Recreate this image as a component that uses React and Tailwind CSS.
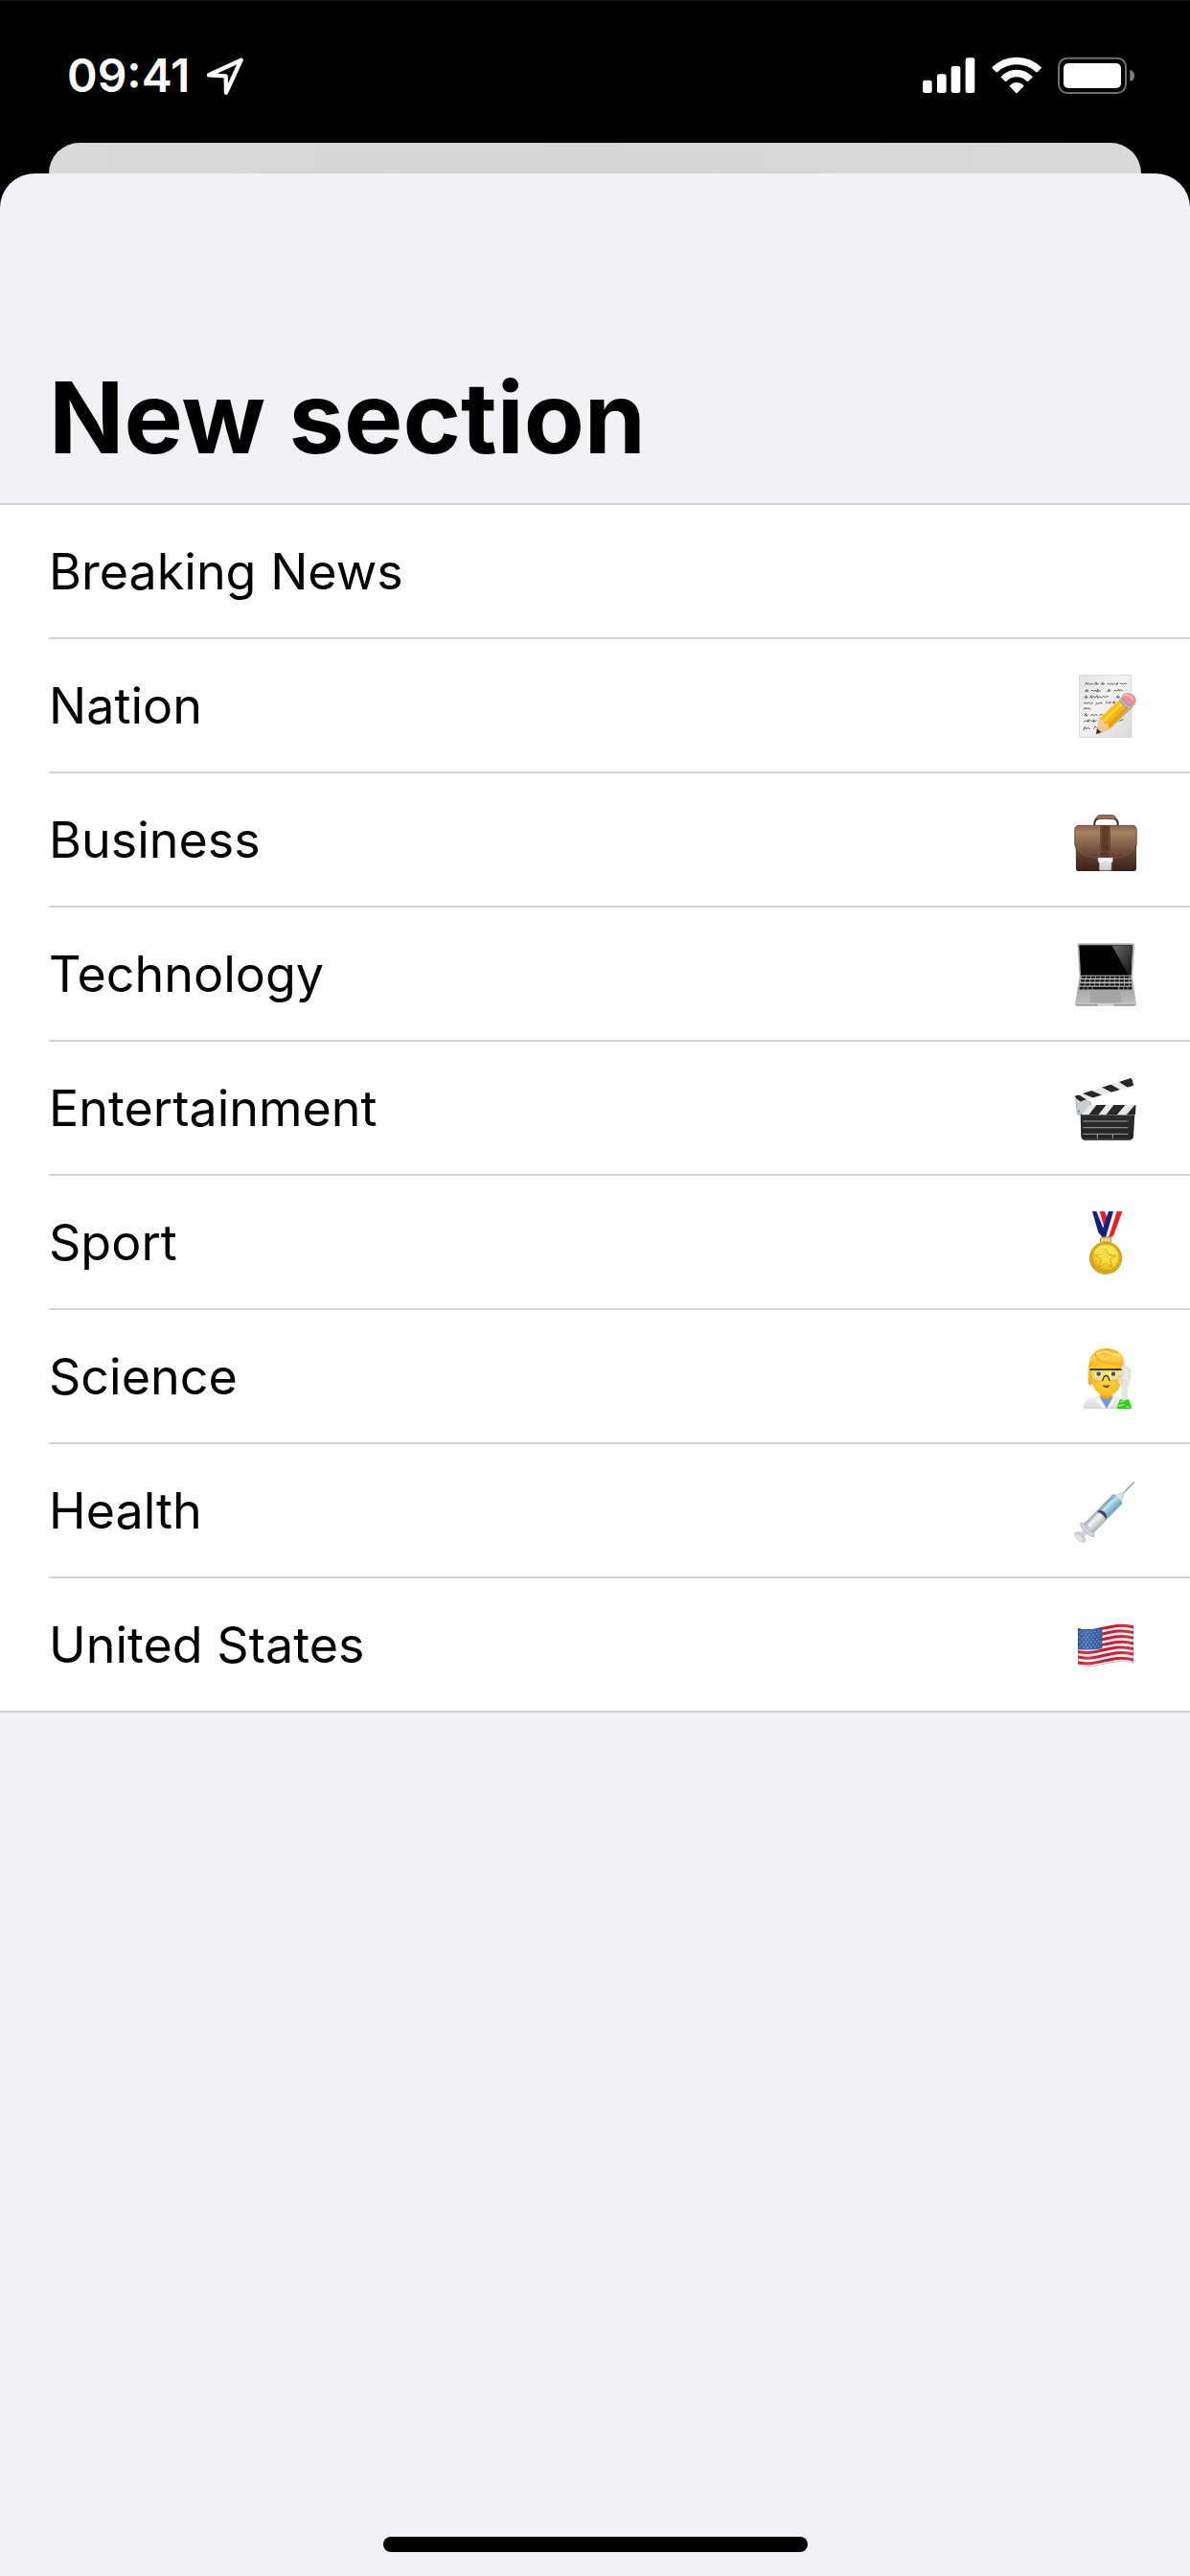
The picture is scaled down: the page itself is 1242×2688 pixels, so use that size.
import React from "react";

const emojiBox = {
  viewBox: "63 72 198 198",
  className: "size-[66px] shrink-0",
  "aria-hidden": true,
};

function MemoIcon() {
  const lines = [
    "M97 104l5-7 3 6 5-4 4 4 6-3 4 2M128 104l4-8 2 7 6-3M147 103l6-7-1 7 7-3M167 103l5-4 4 4 6-4 3 5 5-5 4 3 6-5-3 9M206 101l6-2 5 3 5-3 6 1",
    "M96 125l8-7-2 8 7-4M116 124l4-4 4 4 6-4 3 6 5-9-1 8 9-3M165 125l8-8-2 8 7-4M187 124l5-4 5 4 6-6 1 6 5-4 6 2",
    "M94 145l8-8-2 9 7-4M113 145l4-8 1 8 6-5 5 4 6-7 2 8 6-5 5 4 7-5 5 4 6-4 5 3M194 145l7-8-1 8 8-4",
    "M93 163l6-4 4 4 6-4 6 4 8-4M131 166l4-6 5 3 7-4 6 4M161 163l5-5 4 4 7-6-1 7M182 162l7-7-1 7 5-3",
    "M93 181l5-7 3 6 7-3 8 3",
    "M93 201l8-8-1 9 7-4M115 200l5-4 5 4 6-4 6 4M142 200l6-4 7 3",
    "M93 221l6-6 4 4 5-7-2 8 8-6 5 5 7-7-2 8 10-4",
    "M92 247l5-12 3 7 7-3 7 3M124 242l5-7 5 4",
    "M205 218l8-4 5-3M190 219l7-4",
  ];
  return (
    <svg {...emojiBox}>
      <defs>
        <linearGradient id="memo-paper" x1="0" y1="0" x2="1" y2="1">
          <stop offset="0" stopColor="#e3e3e3" />
          <stop offset=".45" stopColor="#f3f3f3" />
          <stop offset="1" stopColor="#d9d9d9" />
        </linearGradient>
        <linearGradient id="memo-wood" x1="0" y1="0" x2="1" y2="1">
          <stop offset="0" stopColor="#ffd23c" />
          <stop offset=".45" stopColor="#f9bd14" />
          <stop offset="1" stopColor="#c78200" />
        </linearGradient>
      </defs>
      <rect x="80" y="73" width="163" height="195" fill="url(#memo-paper)" stroke="#d2d2d2" strokeWidth="2" />
      <g fill="none" stroke="#4a4a4a" strokeWidth="2.5" strokeLinejoin="round">
        {lines.map((d) => (
          <path key={d} d={d} />
        ))}
      </g>
      <path d="M136 262L180 238L250 172L258 156L240 150L160 226Z" fill="#000" opacity=".22" />
      <path d="M132 258l10-49 63-58 30 26-62 66z" fill="url(#memo-wood)" />
      <path d="M152 219l64-59" stroke="#ffe067" strokeWidth="6" opacity=".7" />
      <path d="M166 237l64-62" stroke="#de9a06" strokeWidth="6" opacity=".7" />
      <path d="M132 258l9-49 11 3 4 12 13 4 4 15z" fill="#ecc995" />
      <path d="M132 258l3-17 13 11z" fill="#2c2a2a" />
      <path d="M205 151l9-9 29 26-8 9q-20-4-30-26z" fill="#8f9db3" />
      <path d="M209 148q10 20 30 26" fill="none" stroke="#dde4ec" strokeWidth="3" />
      <path d="M213 142q3-14 19-13 24 4 25 25 0 12-14 14-22-4-30-26z" fill="#ee8c98" />
      <path d="M222 136q14-2 24 12" fill="none" stroke="#ffbec5" strokeWidth="6" strokeLinecap="round" />
    </svg>
  );
}

function BriefcaseIcon() {
  return (
    <svg {...emojiBox}>
      <defs>
        <linearGradient id="case-flap" x1="0" y1="0" x2="0" y2="1">
          <stop offset="0" stopColor="#87644b" />
          <stop offset=".22" stopColor="#a5825f" />
          <stop offset="1" stopColor="#5b3b2c" />
        </linearGradient>
        <linearGradient id="case-body" x1="0" y1="0" x2="0" y2="1">
          <stop offset="0" stopColor="#7a5846" />
          <stop offset="1" stopColor="#3b211a" />
        </linearGradient>
        <linearGradient id="case-lock" x1="0" y1="0" x2="0" y2="1">
          <stop offset="0" stopColor="#ffffff" />
          <stop offset="1" stopColor="#c6c6c8" />
        </linearGradient>
      </defs>
      <path d="M127 124v-9q2-10 12-12M200 124v-9q-2-10-12-12" fill="none" stroke="#3e2b21" strokeWidth="6" />
      <path d="M131 105q3-13 14-13h36q12 0 14 13-32-5-64 0z" fill="#a17451" stroke="#694833" strokeWidth="3" />
      <path d="M68 170h190v90q0 7-7 7H76q-7 0-7-7z" fill="url(#case-body)" />
      <path d="M65 136q1-12 13-12h168q12 0 13 12v47q-6 40-72 46h-52q-64-6-70-46z" fill="url(#case-flap)" stroke="#54382a" strokeWidth="2" />
      <path d="M72 190q12 34 66 36h50q54-2 66-36" fill="none" stroke="#8a6b57" strokeWidth="2" opacity=".7" />
      <path d="M145 124h31v81h-31z" fill="#50301f" opacity=".8" />
      <path d="M149 125v78M172 125v78" stroke="#7d5a41" strokeWidth="2" />
      <path d="M140 226q2-23 20-23t22 23z" fill="#5b3b2b" stroke="#87634c" strokeWidth="1.5" />
      <path d="M138 225h46v12l-4 4v20q0 4-4 4h-30q-4 0-4-4v-20l-4-4z" fill="url(#case-lock)" stroke="#96908d" strokeWidth="1.5" />
      <path d="M147 247h28v9h-28z" fill="#d2d2d5" />
      <path d="M153 243q8-10 16 0" stroke="#b0b0b2" strokeWidth="2" fill="none" />
    </svg>
  );
}

function LaptopIcon() {
  return (
    <svg {...emojiBox}>
      <defs>
        <linearGradient id="laptop-base" x1="0" y1="0" x2="0" y2="1">
          <stop offset="0" stopColor="#979797" />
          <stop offset="1" stopColor="#bdbdbd" />
        </linearGradient>
        <linearGradient id="laptop-glare" x1="0" y1="0" x2="1" y2="1">
          <stop offset="0" stopColor="#6b6b6b" />
          <stop offset="1" stopColor="#111" />
        </linearGradient>
      </defs>
      <path d="M75 78q0-4 4-4h168q4 0 4 4l-6 98H81z" fill="#b5b5b5" stroke="#8c8c8c" strokeWidth="1.5" />
      <path d="M79 79h167l-5 94H84z" fill="#030303" />
      <path d="M182 80h63l-4 92h-8z" fill="url(#laptop-glare)" />
      <path d="M81 173h163l14 90H66z" fill="url(#laptop-base)" />
      <path d="M84 176h157l3 42H79z" fill="#bdbdbd" />
      <g stroke="#101010" fill="none">
        <path d="M86 179.500h154" strokeWidth="6" strokeDasharray="13 2" />
        <path d="M84 190h158" strokeWidth="7" strokeDasharray="13 2.200" />
        <path d="M82 202h161" strokeWidth="7" strokeDasharray="13.500 2" />
        <path d="M80 213.500h39M121 213.500h81M205 213.500h39" strokeWidth="8" />
      </g>
      <path d="M93 210v8M106 210v8M218 210v8M231 210v8" stroke="#bdbdbd" strokeWidth="2" />
      <path d="M116 222h91l3 36h-97z" fill="#a6a6a6" stroke="#999" strokeWidth="1" />
      <path d="M66 262h69l3 3h49l3-3h68q0 7-7 7H73q-7 0-7-7z" fill="#9b9b9b" />
      <path d="M67 262h68M190 262h67" stroke="#dedede" strokeWidth="2" />
      <path d="M137 267h50" stroke="#eee" strokeWidth="4" />
    </svg>
  );
}

function ClapperIcon() {
  return (
    <svg {...emojiBox}>
      <defs>
        <linearGradient id="clap-body" x1="0" y1="0" x2="0" y2="1">
          <stop offset="0" stopColor="#2e2e2e" />
          <stop offset=".9" stopColor="#222" />
          <stop offset="1" stopColor="#555" />
        </linearGradient>
        <clipPath id="clap-top">
          <path d="M65 131L240 75q4-1 5 2l4 21-173 52z" />
        </clipPath>
        <clipPath id="clap-bar">
          <path d="M86 190l26-31h141q4 0 4 4l-2 25-6 3z" />
        </clipPath>
      </defs>
      <path d="M68 137l8-5 38 18 6 22-15 17H73z" fill="#c9ccd0" stroke="#989ca1" strokeWidth="2" />
      <circle cx="84" cy="147" r="2.500" fill="#555" />
      <circle cx="78" cy="179" r="2.500" fill="#555" />
      <circle cx="102" cy="178" r="2.500" fill="#555" />
      <g clipPath="url(#clap-top)">
        <path d="M60 60h200v100H60z" fill="#e8e8e8" />
        <path d="M58 130l16-5 28 17-18 8zM88 122l28-9 43 19-26 9zM148 103l28-9 36 20-25 9zM203 86l38-12 18 30-23 4z" fill="#282828" />
      </g>
      <path d="M83 188h170l-4 68q-1 13-13 14H98q-12-1-13-13z" fill="url(#clap-body)" />
      <g clipPath="url(#clap-bar)">
        <path d="M80 155h180v40H80z" fill="#e8e8e8" />
        <path d="M104 191l27-34h30l-27 34zM158 191l27-34h36l-29 34zM222 191l29-34h8v34z" fill="#282828" transform="translate(4 0)" />
      </g>
      <path d="M91 210h141M91 230h141M91 250h141M136 250v14M184 250v14" stroke="#b8b8b8" strokeWidth="2.500" />
    </svg>
  );
}

function MedalIcon() {
  return (
    <svg {...emojiBox}>
      <defs>
        <radialGradient id="medal-face" cx=".6" cy=".3" r=".75">
          <stop offset="0" stopColor="#fff05a" />
          <stop offset=".6" stopColor="#f7d52c" />
          <stop offset="1" stopColor="#d9a416" />
        </radialGradient>
      </defs>
      <path d="M120 72h40l25 76-24 5q-16-3-22-15z" fill="#f4f4f6" />
      <path d="M143 72h16l15 42-13 20z" fill="#ee2024" />
      <path d="M120 72h13l27 68-7 14-14-16z" fill="#15207e" />
      <path d="M172 72h41l-26 76-13 8-20-9z" fill="#f7f7f9" />
      <path d="M197 72h17l-26 72q-6 10-17 10z" fill="#ed2025" />
      <path d="M171 72h15l-24 82h-11l-4-10z" fill="#17227f" />
      <path d="M146 168v-9q1-6 7-6h19q7 0 7 6v9" fill="#ecd47e" stroke="#a78028" strokeWidth="3" />
      <circle cx="162" cy="218" r="50" fill="#dfa71f" stroke="#b37f12" strokeWidth="2" />
      <circle cx="162" cy="217" r="43" fill="url(#medal-face)" stroke="#c4941a" strokeWidth="2" />
      <path d="M162 189l9 19 22 2-17 14 5 22-19-12-20 12 6-22-17-14 22-2z" fill="#fade45" stroke="#b5841a" strokeWidth="2" strokeLinejoin="round" />
      <path d="M128 205q9-21 29-23" fill="none" stroke="#fff7a0" strokeWidth="4" opacity=".7" />
      <path d="M162 190l-8 19-20 2" fill="none" stroke="#fff4a0" strokeWidth="2" />
    </svg>
  );
}

function ScientistIcon() {
  return (
    <svg {...emojiBox}>
      <defs>
        <linearGradient id="sci-hair" x1="0" y1="0" x2="0" y2="1">
          <stop offset="0" stopColor="#f6b02a" />
          <stop offset=".45" stopColor="#ffd251" />
          <stop offset="1" stopColor="#f0a51d" />
        </linearGradient>
        <radialGradient id="sci-skin" cx=".5" cy=".5" r=".6">
          <stop offset="0" stopColor="#ffdf45" />
          <stop offset="1" stopColor="#f5b51f" />
        </radialGradient>
        <linearGradient id="sci-coat" x1="0" y1="0" x2="0" y2="1">
          <stop offset="0" stopColor="#f4f5f6" />
          <stop offset="1" stopColor="#d6d8db" />
        </linearGradient>
      </defs>
      <path d="M92 270q0-28 27-35l24-7h40l26 8q25 9 25 34z" fill="url(#sci-coat)" />
      <path d="M143 232l22 38 20-38z" fill="#6a9bdb" />
      <path d="M145 212h37v20q-18 16-37 0z" fill="#eda61a" />
      <path d="M139 230l25 40-11-3-24-20zM188 230l-22 40 15-7 15-21z" fill="#fcfcfc" stroke="#c7c9cc" strokeWidth="1.500" />
      <path d="M108 192q-4-26 1-60 4-38 34-48 22-6 41 0 33 7 37 45 2 34-3 61-6 8-12 0h-84q-8 12-14 2z" fill="url(#sci-hair)" />
      <path d="M119 140q14-8 15-30 34 18 78 20v46q-2 27-18 42-14 11-29 11-16 0-29-11-17-17-17-42z" fill="url(#sci-skin)" />
      <path d="M110 142q-4-30 24-52 24-12 54-2 28 14 29 50-8-6-12-10-42-2-68-20-4 24-27 34z" fill="url(#sci-hair)" />
      <path d="M134 99q16-12 34-7 22 12 43 10" fill="none" stroke="#ffe68c" strokeWidth="5" opacity=".8" />
      <path d="M131 97q-3 20 21 27 26 8 55 5" fill="none" stroke="#d98f12" strokeWidth="3" opacity=".6" />
      <path d="M117 149h92v17q-3 18-23 17-14 0-18-14h-9q-4 15-20 15-18-2-22-18z" fill="#eef0d0" fillOpacity=".4" stroke="#b89c5c" strokeWidth="2" />
      <ellipse cx="140" cy="162" rx="11" ry="9" fill="#faf8ec" />
      <ellipse cx="186" cy="162" rx="11" ry="9" fill="#faf8ec" />
      <circle cx="140" cy="161" r="7" fill="#5a5148" />
      <circle cx="186" cy="161" r="7" fill="#5a5148" />
      <path d="M114 147h97" stroke="#161616" strokeWidth="5" strokeLinecap="round" />
      <path d="M152 182q4-16 11-16t11 16" fill="none" stroke="#3a3320" strokeWidth="4" strokeLinecap="round" />
      <path d="M154 197q9 3 19 0-1 6-9 6t-10-6z" fill="#7a2d10" stroke="#6b2c0c" strokeWidth="2" />
      <path d="M211 190h19l1 45 12 29q2 6-4 6h-37q-6 0-4-6l13-29z" fill="#dce8dc" opacity=".9" />
      <path d="M207 240q13 6 27 0l9 24q1 6-5 6h-37q-5 0-3-6z" fill="#2fd01c" />
      <path d="M210 248l10-3M205 261l13-4M227 263l8 3" stroke="#a3f28d" strokeWidth="4" strokeLinecap="round" />
      <g fill="#e2e2e2" opacity=".88">
        <circle cx="221" cy="143" r="10" />
        <circle cx="232" cy="152" r="11" />
        <circle cx="213" cy="159" r="10" />
        <circle cx="230" cy="170" r="12" />
        <circle cx="214" cy="182" r="13" />
        <circle cx="225" cy="190" r="12" />
      </g>
      <path d="M217 150q10-5 14 3M212 174q8-6 17 1M220 164q11-3 12 5" fill="none" stroke="#f8f8f8" strokeWidth="3" />
    </svg>
  );
}

function SyringeIcon() {
  return (
    <svg {...emojiBox}>
      <defs>
        <linearGradient id="syr-glass" x1="0" y1="0" x2="0" y2="1">
          <stop offset="0" stopColor="#a8afb7" />
          <stop offset=".4" stopColor="#f0f1f3" />
          <stop offset="1" stopColor="#acb3ba" />
        </linearGradient>
        <linearGradient id="syr-fluid" x1="0" y1="0" x2="0" y2="1">
          <stop offset="0" stopColor="#7fa5b8" />
          <stop offset=".35" stopColor="#b4dcee" />
          <stop offset="1" stopColor="#6f9fbb" />
        </linearGradient>
      </defs>
      <g transform="translate(82 252) rotate(-45.500)">
        <path d="M178 0h62" stroke="#a6adb5" strokeWidth="4" />
        <path d="M205-1h38" stroke="#747d87" strokeWidth="2" />
        <path d="M168-12l22 7v10l-22 8z" fill="#d3eae9" stroke="#9db6bd" strokeWidth="2" />
        <rect x="-3" y="-7" width="40" height="14" fill="#d4d7da" stroke="#b6babf" strokeWidth="1.500" />
        <rect x="32" y="-20" width="138" height="40" rx="6" fill="url(#syr-glass)" stroke="#8e979f" strokeWidth="2" />
        <path d="M103-18h61q6 0 6 6v24q0 6-6 6h-61z" fill="url(#syr-fluid)" />
        <path d="M111-18v36" stroke="#85b2ca" strokeWidth="2" />
        <path d="M40-8h118" stroke="#fff" strokeWidth="3" opacity=".6" />
        <path d="M94-18q10 18 2 36 13-2 13-18t-15-18z" fill="#3d444d" />
        <ellipse cx="32" cy="0" rx="8" ry="29" fill="#dcdfe2" stroke="#9ba1a7" strokeWidth="2.500" />
        <ellipse cx="35" cy="0" rx="5" ry="20" fill="#c9ced2" />
        <ellipse cx="0" cy="0" rx="11" ry="20" fill="#cacdd0" stroke="#b2b6bb" strokeWidth="2" />
        <ellipse cx="-4" cy="0" rx="7" ry="15" fill="#dfe1e3" />
      </g>
    </svg>
  );
}

function FlagIcon() {
  const stripes = [122, 139, 156, 173, 190, 207, 224];
  const starRows = [128, 136, 144, 152, 160, 168, 176];
  return (
    <svg {...emojiBox}>
      <defs>
        <clipPath id="flag-shape">
          <path d="M75 117c55 16 110-28 174-8v118c-64-20-119 24-174 4z" />
        </clipPath>
        <linearGradient id="flag-shade">
          <stop offset="0" stopColor="#000" stopOpacity=".12" />
          <stop offset=".2" stopColor="#fff" stopOpacity=".1" />
          <stop offset=".55" stopColor="#000" stopOpacity=".05" />
          <stop offset=".85" stopColor="#fff" stopOpacity=".08" />
          <stop offset="1" stopColor="#000" stopOpacity=".2" />
        </linearGradient>
      </defs>
      <g clipPath="url(#flag-shape)">
        <path d="M63 72h198v198H63z" fill="#fafafa" />
        {stripes.map((y) => (
          <path key={y} d={`M75 ${y}c55 16 110-28 174-8`} fill="none" stroke="#d61a30" strokeWidth="9" />
        ))}
        <path d="M75 114q38 14 76-1v68q-38 6-76 2z" fill="#2d5ba5" />
        {starRows.map((y, i) => (
          <path
            key={y}
            d={`M${i % 2 ? 85 : 79} ${y}q34 4 ${i % 2 ? 62 : 70}-4`}
            fill="none"
            stroke="#c3d5ec"
            strokeWidth="3"
            strokeDasharray="3.500 8.500"
          />
        ))}
        <path d="M63 72h198v198H63z" fill="url(#flag-shade)" />
        <path d="M75 117c55 16 110-28 174-8v118c-64-20-119 24-174 4z" fill="none" stroke="#5a2029" strokeWidth="3" opacity=".35" />
      </g>
    </svg>
  );
}

function LocationArrow() {
  return (
    <svg viewBox="648 177 120 120" className="size-10" aria-label="Location in use">
      <path d="M657 235L758 188L711 290L710 238Z" fill="none" stroke="#fff" strokeWidth="13" strokeLinejoin="round" />
    </svg>
  );
}

function SignalIcon() {
  return (
    <svg viewBox="188 177 165 120" className="h-10 w-[55px]" aria-label="Cellular signal" fill="#fff">
      <rect x="188" y="251" width="29" height="40" rx="7" />
      <rect x="233" y="232" width="29" height="59" rx="7" />
      <rect x="277" y="207" width="29" height="84" rx="7" />
      <rect x="322" y="181" width="29" height="110" rx="7" />
    </svg>
  );
}

function WifiIcon() {
  return (
    <svg viewBox="403 175 156 120" className="h-10 w-[52px]" aria-label="Wi-Fi" fill="#fff">
      <path d="M405 208q32-31 76-31t77 31q2 2 0 4l-11 11q-3 2-6 0-26-23-60-23t-59 23q-3 2-6 0l-11-11q-2-2 0-4z" />
      <path d="M433 237q20-21 48-21t49 21q2 2 0 4l-12 11q-3 2-5 0-14-13-32-13t-31 13q-3 2-5 0l-12-11q-2-2 0-4z" />
      <path d="M460 265q9-9 21-9t22 9q2 2 0 4l-20 20q-2 2-4 0l-19-20q-2-2 0-4z" />
    </svg>
  );
}

function BatteryIcon() {
  return (
    <svg viewBox="612 176 240 120" className="h-10 w-20" aria-label="Battery full">
      <rect x="615" y="181" width="210" height="109" rx="27" fill="none" stroke="#6f6f6f" strokeWidth="6" />
      <rect x="630" y="197" width="180" height="78" rx="15" fill="#fff" />
      <path d="M838 218q14 4 14 18t-14 17z" fill="#808080" />
    </svg>
  );
}

const sections = [
  { name: "Breaking News" },
  { name: "Nation", Icon: MemoIcon },
  { name: "Business", Icon: BriefcaseIcon },
  { name: "Technology", Icon: LaptopIcon },
  { name: "Entertainment", Icon: ClapperIcon },
  { name: "Sport", Icon: MedalIcon },
  { name: "Science", Icon: ScientistIcon },
  { name: "Health", Icon: SyringeIcon },
  { name: "United States", Icon: FlagIcon },
];

function StatusBar() {
  return (
    <header className="flex items-center justify-between border-t border-[#161616] pt-[58px] pr-[58px] pb-[50px] pl-[70px] text-white">
      <div className="flex items-center gap-[17px]">
        <time className="text-[48px] leading-10 font-semibold">09:41</time>
        <LocationArrow />
      </div>
      <div className="flex items-center gap-[17px]">
        <SignalIcon />
        <WifiIcon />
        <BatteryIcon />
      </div>
    </header>
  );
}

function SectionRow({ name, Icon }) {
  return (
    <li className="group pl-[51px]">
      <button
        type="button"
        className="flex h-[140px] w-full items-center justify-between border-b-2 border-[#d6d6d8] pt-[2px] pr-[55px] text-left group-last:h-[138px] group-last:border-b-0"
      >
        <span>{name}</span>
        {Icon && <Icon />}
      </button>
    </li>
  );
}

export default function App() {
  return (
    <div className="flex min-h-screen flex-col bg-black font-['Inter','Liberation_Sans',sans-serif] text-black">
      <StatusBar />
      <div className="mx-[51px] h-8 rounded-t-[32px] bg-linear-to-r from-[#dad8d8] via-[#d5d5d5] to-[#dadada]" />
      <main className="flex grow flex-col rounded-t-[36px] bg-[#f2f1f6]">
        <h1 className="px-[51px] pt-[195px] pb-[29px] text-[103px] leading-[120px] font-bold">New section</h1>
        <ul className="border-y-2 border-[#d3d3d6] bg-white text-[52px] leading-[64px]">
          {sections.map((section) => (
            <SectionRow key={section.name} {...section} />
          ))}
        </ul>
        <div className="mx-auto mt-auto mb-[25px] h-4 w-[443px] rounded-full bg-black" />
      </main>
    </div>
  );
}
